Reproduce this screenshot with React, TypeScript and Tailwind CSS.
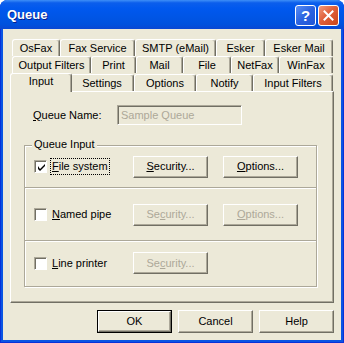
import type { ReactNode } from "react";

const FONT = { fontFamily: '"Liberation Sans", Arial, sans-serif' };

type Tab = { label: string; w: number; active?: boolean };

const ROWS: Tab[][] = [
  [
    { label: "OsFax", w: 48 },
    { label: "Fax Service", w: 75 },
    { label: "SMTP (eMail)", w: 81 },
    { label: "Esker", w: 49 },
    { label: "Esker Mail", w: 68 },
  ],
  [
    { label: "Output Filters", w: 79 },
    { label: "Print", w: 45 },
    { label: "Mail", w: 47 },
    { label: "File", w: 48 },
    { label: "NetFax", w: 48 },
    { label: "WinFax", w: 54 },
  ],
  [
    { label: "Input", w: 58, active: true },
    { label: "Settings", w: 64 },
    { label: "Options", w: 62 },
    { label: "Notify", w: 57 },
    { label: "Input Filters", w: 80 },
  ],
];

function TabItem({ t }: { t: Tab }) {
  if (t.active) {
    return (
      <div
        className="relative z-10 -mx-[2px] -mb-px flex h-[19px] shrink-0 items-center justify-center rounded-t-[3px] border-l border-t border-r border-l-white border-t-white border-r-[#716F64] bg-[#ECE9D8] pb-[3px] shadow-[inset_-1px_0_0_#ACA899]"
        style={{ width: t.w + 4 }}
      >
        {t.label}
      </div>
    );
  }
  return (
    <div
      className="flex h-[17px] shrink-0 items-center justify-center rounded-t-[3px] border-l border-t border-r border-l-white border-t-white border-r-[#716F64] shadow-[inset_-1px_0_0_#ACA899]"
      style={{ width: t.w }}
    >
      {t.label}
    </div>
  );
}

function Btn({
  children,
  w = 75,
  h = 22,
  disabled,
  isDefault,
}: {
  children: ReactNode;
  w?: number;
  h?: number;
  disabled?: boolean;
  isDefault?: boolean;
}) {
  const inner = (
    <div
      className={`flex h-full w-full items-center justify-center border border-t-white border-l-white border-r-[#716F64] border-b-[#716F64] shadow-[inset_-1px_-1px_0_#ACA899] ${
        disabled ? "text-[#ACA899]" : "text-black"
      }`}
    >
      {children}
    </div>
  );
  return (
    <div
      className={`shrink-0 bg-[#ECE9D8] ${isDefault ? "border border-black" : ""}`}
      style={{ width: w, height: h }}
    >
      {inner}
    </div>
  );
}

function CheckBox({ checked }: { checked?: boolean }) {
  return (
    <div className="flex h-[13px] w-[13px] shrink-0 items-center justify-center border border-t-[#ACA899] border-l-[#ACA899] border-r-white border-b-white bg-white shadow-[inset_1px_1px_0_#716F64]">
      {checked && (
        <svg width="7" height="7" viewBox="0 0 7 7" className="ml-px mt-px">
          <path d="M0 2v3l2 2 5-5V0L2 5z" fill="#000" />
        </svg>
      )}
    </div>
  );
}

function Sep() {
  return <div className="h-px border-b border-white bg-[#ACA899] box-content" />;
}

function InputRow({
  h,
  label,
  checked,
  focused,
  enabled,
  options,
  secUnderline,
}: {
  h: number;
  label: ReactNode;
  checked?: boolean;
  focused?: boolean;
  enabled?: boolean;
  options?: boolean;
  secUnderline: "S" | "c";
}) {
  return (
    <div className="flex items-center pl-[9px]" style={{ height: h }}>
      <div className="flex w-[99px] items-center gap-[3px]">
        <CheckBox checked={checked} />
        <span
          className={`px-px leading-[15px] ${
            focused ? "border border-dotted border-black" : "border border-transparent"
          }`}
        >
          {label}
        </span>
      </div>
      <Btn disabled={!enabled}>
        {secUnderline === "S" ? (
          <span>
            <u>S</u>ecurity...
          </span>
        ) : (
          <span>
            Se<u>c</u>urity...
          </span>
        )}
      </Btn>
      {options && (
        <div className="ml-[15px]">
          <Btn disabled={!enabled}>
            <span>
              <u>O</u>ptions...
            </span>
          </Btn>
        </div>
      )}
    </div>
  );
}

function TitleBar() {
  return (
    <div className="flex h-[29px] shrink-0 items-center rounded-t-[7px] bg-[linear-gradient(to_bottom,#3E8FF7_0%,#0B5EEC_10%,#0058EE_30%,#0055E5_60%,#0051DD_85%,#0A47D2_100%)] pl-[7px] pr-[5px] pt-[1px]">
      <span
        className="flex-1 text-[13px] font-bold text-white [text-shadow:1px_1px_0_#0A1E8A]"
        style={FONT}
      >
        Queue
      </span>
      <div className="flex gap-[2px]">
        <div className="flex h-[21px] w-[21px] items-center justify-center rounded-[3px] border border-white bg-[linear-gradient(135deg,#5A8EF5_0%,#2A63E0_50%,#1F55D6_100%)] text-[15px] font-bold leading-none text-white" style={FONT}>
          ?
        </div>
        <div className="flex h-[21px] w-[21px] items-center justify-center rounded-[3px] border border-white bg-[linear-gradient(135deg,#F19A7C_0%,#E0603A_45%,#CC4418_100%)]">
          <svg width="11" height="11" viewBox="0 0 11 11">
            <path d="M1.5 1.5l8 8M9.5 1.5l-8 8" stroke="#fff" strokeWidth="2" strokeLinecap="square" />
          </svg>
        </div>
      </div>
    </div>
  );
}

export default function App() {
  return (
    <div className="bg-white">
      <div
        className="flex h-[343px] w-[344px] flex-col rounded-t-[8px] bg-[#0A55E3] shadow-[inset_1px_0_0_#0831D9,inset_-1px_0_0_#0831D9,inset_0_-1px_0_#0831D9]"
        style={FONT}
      >
        <TitleBar />
        <div className="mx-[3px] mb-[3px] flex flex-1 flex-col bg-[#ECE9D8] text-[11px] text-black">
          {/* tab rows */}
          <div className="ml-[9px] mt-[10px] flex flex-col">
            <div className="flex h-[17px]">
              {ROWS[0].map((t) => (
                <TabItem key={t.label} t={t} />
              ))}
            </div>
            <div className="flex h-[17px]">
              {ROWS[1].map((t) => (
                <TabItem key={t.label} t={t} />
              ))}
            </div>
            <div className="flex h-[18px] items-end">
              {ROWS[2].map((t) => (
                <TabItem key={t.label} t={t} />
              ))}
            </div>
          </div>

          {/* panel */}
          <div className="ml-[7px] flex h-[212px] w-[324px] flex-col border border-t-white border-l-white border-r-[#716F64] border-b-[#716F64] px-[13px] pt-[13px] shadow-[inset_-1px_-1px_0_#ACA899]">
            <div className="flex h-[20px] items-center pl-[9px]">
              <span className="w-[84px]">
                <u>Q</u>ueue Name:
              </span>
              <div className="flex h-[20px] w-[125px] items-center border border-t-[#ACA899] border-l-[#ACA899] border-r-white border-b-white pl-[3px] text-[#ACA899] shadow-[inset_1px_1px_0_#716F64]">
                Sample Queue
              </div>
            </div>

            <div className="relative mt-[20px] flex h-[142px] w-[293px] flex-col border border-[#ACA899] shadow-[inset_1px_1px_0_#fff,1px_1px_0_#fff]">
              <span className="absolute -top-[8px] left-[7px] bg-[#ECE9D8] px-[2px] leading-[13px]">
                Queue Input
              </span>
              <InputRow
                h={41}
                checked
                focused
                enabled
                options
                secUnderline="S"
                label={
                  <>
                    <u>F</u>ile system
                  </>
                }
              />
              <Sep />
              <InputRow
                h={51}
                options
                secUnderline="c"
                label={
                  <>
                    <u>N</u>amed pipe
                  </>
                }
              />
              <Sep />
              <InputRow
                h={42}
                secUnderline="c"
                label={
                  <>
                    <u>L</u>ine printer
                  </>
                }
              />
            </div>
          </div>

          {/* dialog buttons */}
          <div className="mr-[7px] mt-[7px] flex justify-end gap-[6px]">
            <Btn h={23} isDefault>
              OK
            </Btn>
            <Btn h={23}>Cancel</Btn>
            <Btn h={23}>Help</Btn>
          </div>
        </div>
      </div>
    </div>
  );
}
